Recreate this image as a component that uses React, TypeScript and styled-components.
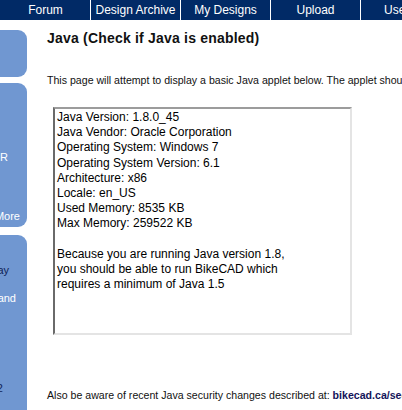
import styled, { createGlobalStyle } from 'styled-components';

const GlobalStyle = createGlobalStyle`
  html, body {
    margin: 0;
    padding: 0;
    background: #ffffff;
    overflow: hidden;
  }
  body {
    font-family: "Liberation Sans", Arial, sans-serif;
    color: #000000;
  }
`;

const Page = styled.div`
  width: 402px;
  height: 410px;
  overflow: hidden;
  display: flex;
  flex-direction: column;
`;

const NavBar = styled.div`
  display: flex;
  height: 20px;
  padding-left: 1px;
  background: #012a66;
  flex-shrink: 0;
`;

const NavItem = styled.div<{ $w?: number }>`
  width: ${(p) => p.$w ?? 89}px;
  flex-shrink: 0;
  border-right: 1px solid #ffffff;
  display: flex;
  align-items: center;
  justify-content: center;
  color: #ffffff;
  font-size: 12px;
  white-space: nowrap;
  overflow: hidden;
  &:last-child {
    border-right: none;
  }
`;

const Body = styled.div`
  display: flex;
  flex: 1;
  min-height: 0;
`;

const Sidebar = styled.div`
  width: 27px;
  flex-shrink: 0;
  display: flex;
  flex-direction: column;
  padding-top: 10px;
`;

const SideBox = styled.div<{ $h: number; $gap?: number }>`
  height: ${(p) => p.$h}px;
  margin-bottom: ${(p) => p.$gap ?? 0}px;
  flex-shrink: 0;
  background: #7097d1;
  border-radius: 0 9px 9px 0;
  position: relative;
  overflow: hidden;
`;

const SideLine = styled.div<{ $top: number; $right: number; $dark?: boolean }>`
  position: absolute;
  top: ${(p) => p.$top}px;
  left: 0;
  right: ${(p) => p.$right}px;
  display: flex;
  justify-content: flex-end;
  white-space: nowrap;
  font-size: 11px;
  line-height: 13px;
  color: ${(p) => (p.$dark ? '#102456' : '#ffffff')};
`;

const Main = styled.div`
  flex: 1;
  padding: 10px 0 0 20px;
  min-width: 0;
  white-space: nowrap;
`;

const Heading = styled.h1`
  margin: 0;
  font-size: 14px;
  letter-spacing: 0.2px;
  line-height: 16px;
  font-weight: bold;
  color: #111111;
`;

const Intro = styled.p`
  margin: 28px 0 0 0;
  font-size: 10.6px;
  line-height: 13px;
  color: #111111;
`;

const Applet = styled.div`
  margin: 20px 0 0 6px;
  box-sizing: border-box;
  width: 299px;
  height: 228px;
  border-top: 2px solid #9c9c9c;
  border-left: 2px solid #6a6a6a;
  border-right: 2px solid #e4e4e4;
  border-bottom: 2px solid #e4e4e4;
  padding: 1px 2px;
  font-size: 12px;
  line-height: 15.2px;
  color: #000000;
`;

const AppletLine = styled.div`
  min-height: 15.2px;
`;

const Note = styled.p`
  margin: 54px 0 0 0;
  font-size: 10.6px;
  line-height: 13px;
  color: #111111;
`;

const NoteLink = styled.b`
  color: #14145a;
`;

const navItems = [
  { label: 'Forum' },
  { label: 'Design Archive' },
  { label: 'My Designs' },
  { label: 'Upload' },
  { label: 'User Designs', w: 118 },
];

const appletLines = [
  'Java Version: 1.8.0_45',
  'Java Vendor: Oracle Corporation',
  'Operating System: Windows 7',
  'Operating System Version: 6.1',
  'Architecture: x86',
  'Locale: en_US',
  'Used Memory: 8535 KB',
  'Max Memory: 259522 KB',
  '',
  'Because you are running Java version 1.8,',
  'you should be able to run BikeCAD which',
  'requires a minimum of Java 1.5',
];

export default function App() {
  return (
    <>
      <GlobalStyle />
      <Page>
        <NavBar>
          {navItems.map((item) => (
            <NavItem key={item.label} $w={item.w}>
              {item.label}
            </NavItem>
          ))}
        </NavBar>
        <Body>
          <Sidebar>
            <SideBox $h={47} $gap={6} />
            <SideBox $h={144} $gap={8}>
              <SideLine $top={68} $right={19}>BikeCAD PRO FOR</SideLine>
              <SideLine $top={127} $right={7}>Learn More</SideLine>
            </SideBox>
            <SideBox $h={200}>
              <SideLine $top={29} $right={18} $dark>BikeCAD today</SideLine>
              <SideLine $top={57} $right={11}>Bicycle brand</SideLine>
              <SideLine $top={147} $right={24} $dark>Version 2</SideLine>
            </SideBox>
          </Sidebar>
          <Main>
            <Heading>Java (Check if Java is enabled)</Heading>
            <Intro>
              This page will attempt to display a basic Java applet below. The applet should show information about your Java installation.
            </Intro>
            <Applet>
              {appletLines.map((line, i) => (
                <AppletLine key={i}>{line}</AppletLine>
              ))}
            </Applet>
            <Note>
              Also be aware of recent Java security changes described at: <NoteLink>bikecad.ca/security</NoteLink>
            </Note>
          </Main>
        </Body>
      </Page>
    </>
  );
}
